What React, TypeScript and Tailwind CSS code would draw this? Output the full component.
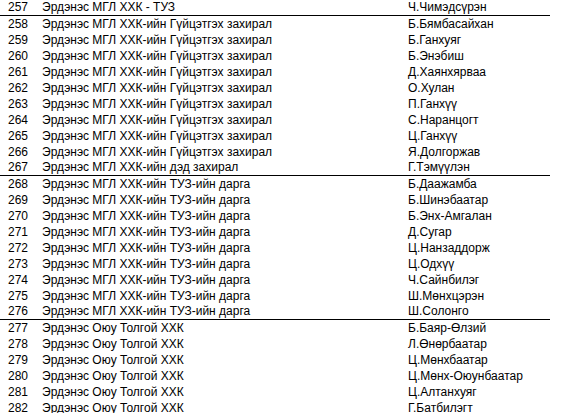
import React from 'react';

type Row = {
  no: number;
  org: string;
  name: string;
  line?: boolean;
};

const ceo = 'Эрдэнэс МГЛ ХХК-ийн Гүйцэтгэх захирал';
const tuz = 'Эрдэнэс МГЛ ХХК-ийн ТУЗ-ийн дарга';
const ot = 'Эрдэнэс Оюу Толгой ХХК';

const rows: Row[] = [
  { no: 257, org: 'Эрдэнэс МГЛ ХХК - ТУЗ', name: 'Ч.Чимэдсүрэн', line: true },
  { no: 258, org: ceo, name: 'Б.Бямбасайхан' },
  { no: 259, org: ceo, name: 'Б.Ганхуяг' },
  { no: 260, org: ceo, name: 'Б.Энэбиш' },
  { no: 261, org: ceo, name: 'Д.Хаянхярваа' },
  { no: 262, org: ceo, name: 'О.Хулан' },
  { no: 263, org: ceo, name: 'П.Ганхүү' },
  { no: 264, org: ceo, name: 'С.Наранцогт' },
  { no: 265, org: ceo, name: 'Ц.Ганхүү' },
  { no: 266, org: ceo, name: 'Я.Долгоржав' },
  { no: 267, org: 'Эрдэнэс МГЛ ХХК-ийн дэд захирал', name: 'Г.Тэмүүлэн', line: true },
  { no: 268, org: tuz, name: 'Б.Даажамба' },
  { no: 269, org: tuz, name: 'Б.Шинэбаатар' },
  { no: 270, org: tuz, name: 'Б.Энх-Амгалан' },
  { no: 271, org: tuz, name: 'Д.Сугар' },
  { no: 272, org: tuz, name: 'Ц.Нанзаддорж' },
  { no: 273, org: tuz, name: 'Ц.Одхүү' },
  { no: 274, org: tuz, name: 'Ч.Сайнбилэг' },
  { no: 275, org: tuz, name: 'Ш.Мөнхцэрэн' },
  { no: 276, org: tuz, name: 'Ш.Солонго', line: true },
  { no: 277, org: ot, name: 'Б.Баяр-Өлзий' },
  { no: 278, org: ot, name: 'Л.Өнөрбаатар' },
  { no: 279, org: ot, name: 'Ц.Мөнхбаатар' },
  { no: 280, org: ot, name: 'Ц.Мөнх-Оюунбаатар' },
  { no: 281, org: ot, name: 'Ц.Алтанхуяг' },
  { no: 282, org: ot, name: 'Г.Батбилэгт' },
];

export default function App() {
  return (
    <div
      className="w-[583px] h-[413px] overflow-hidden bg-white text-black text-[12px]"
      style={{ fontFamily: '"Liberation Sans", Arial, sans-serif' }}
    >
      <div className="w-[550px]">
        {rows.map((r) => (
          <div
            key={r.no}
            className={`flex items-center ${r.line ? 'h-[16px] border-b border-black' : 'h-[16px]'}`}
          >
            <div className="w-[42px] pl-[8px] leading-[15px]">{r.no}</div>
            <div className="w-[366px] leading-[15px] whitespace-nowrap">{r.org}</div>
            <div className="flex-1 leading-[15px] whitespace-nowrap">{r.name}</div>
          </div>
        ))}
      </div>
    </div>
  );
}
